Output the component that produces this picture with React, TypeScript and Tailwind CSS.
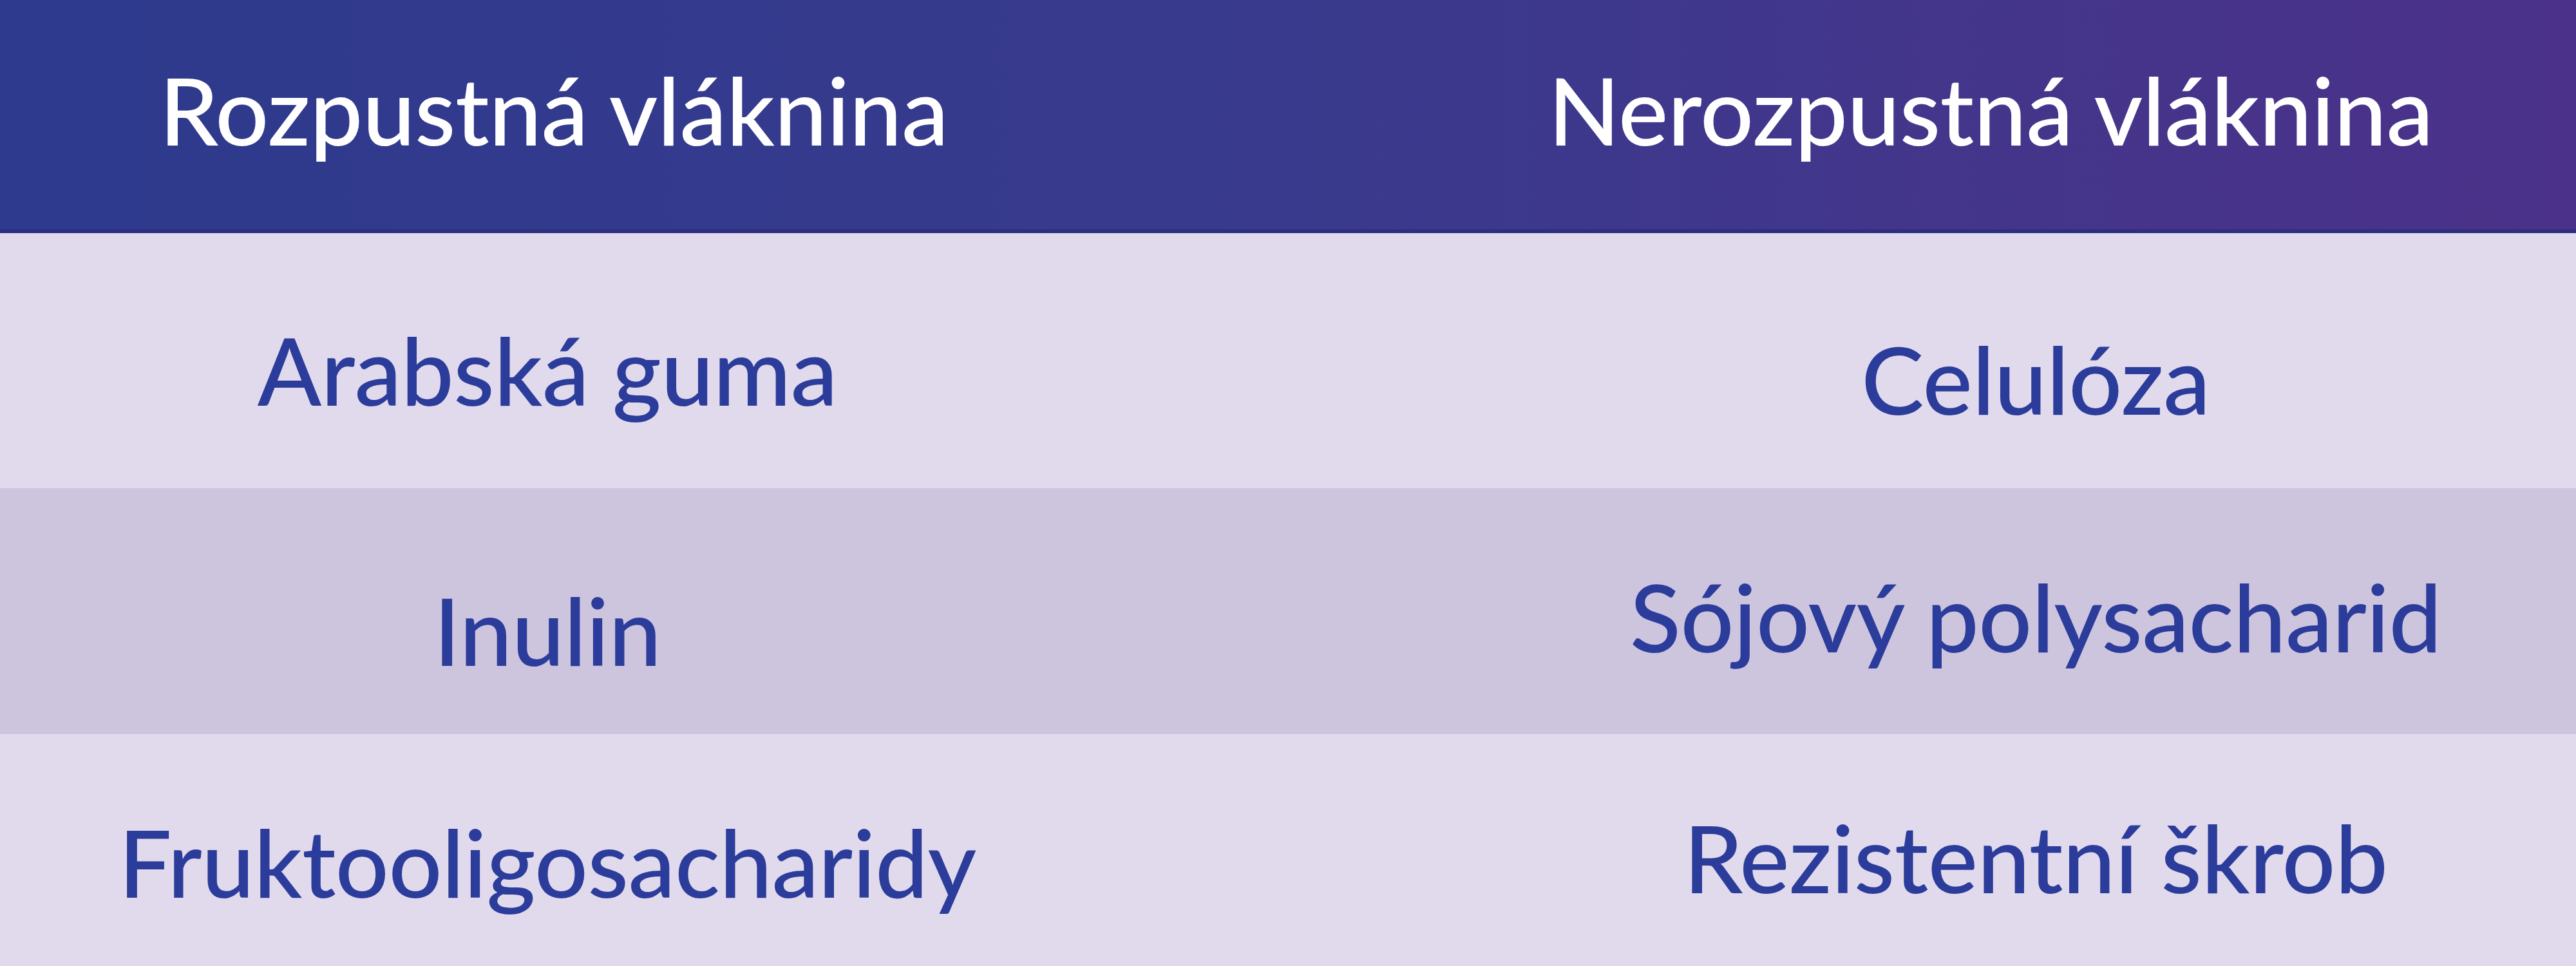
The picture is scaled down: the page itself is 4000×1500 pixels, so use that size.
import React from 'react';

const rows = [
  { left: 'Arabská guma', right: 'Celulóza', bg: 'bg-[#e1d9ec]', h: 'h-[396px]', pl: 'pt-[139px]', pr: 'pt-[153px]' },
  { left: 'Inulin', right: 'Sójový polysacharid', bg: 'bg-[#cdc4de]', h: 'h-[382px]', pl: 'pt-[147px]', pr: 'pt-[126px]' },
  { left: 'Fruktooligosacharidy', right: 'Rezistentní škrob', bg: 'bg-[#e1d9ec]', h: 'h-[360px]', pl: 'pt-[125px]', pr: 'pt-[118px]' },
];

export default function App() {
  return (
    <div className="w-[4000px] h-[1500px] flex flex-col font-['Lato','Noto_Sans',sans-serif] font-medium text-[146px] tracking-[-0.5px] leading-none">
      <div className="h-[362px] flex bg-gradient-to-r from-[#2d3a8d] via-[#393a8d] to-[#4b3189] border-b-[6px] border-[#2c2f7f] text-white">
        <div className="w-[1720px] flex justify-center pt-[97px]">Rozpustná vláknina</div>
        <div className="flex-1 flex justify-end pr-[222px] pt-[97px]">Nerozpustná vláknina</div>
      </div>
      {rows.map((r) => (
        <div key={r.left} className={`${r.h} ${r.bg} flex text-[#2b3c9b]`}>
          <div className={`w-[1700px] flex justify-center ${r.pl}`}>{r.left}</div>
          <div className={`flex-1 flex justify-center pl-[622px] ${r.pr}`}>{r.right}</div>
        </div>
      ))}
    </div>
  );
}
